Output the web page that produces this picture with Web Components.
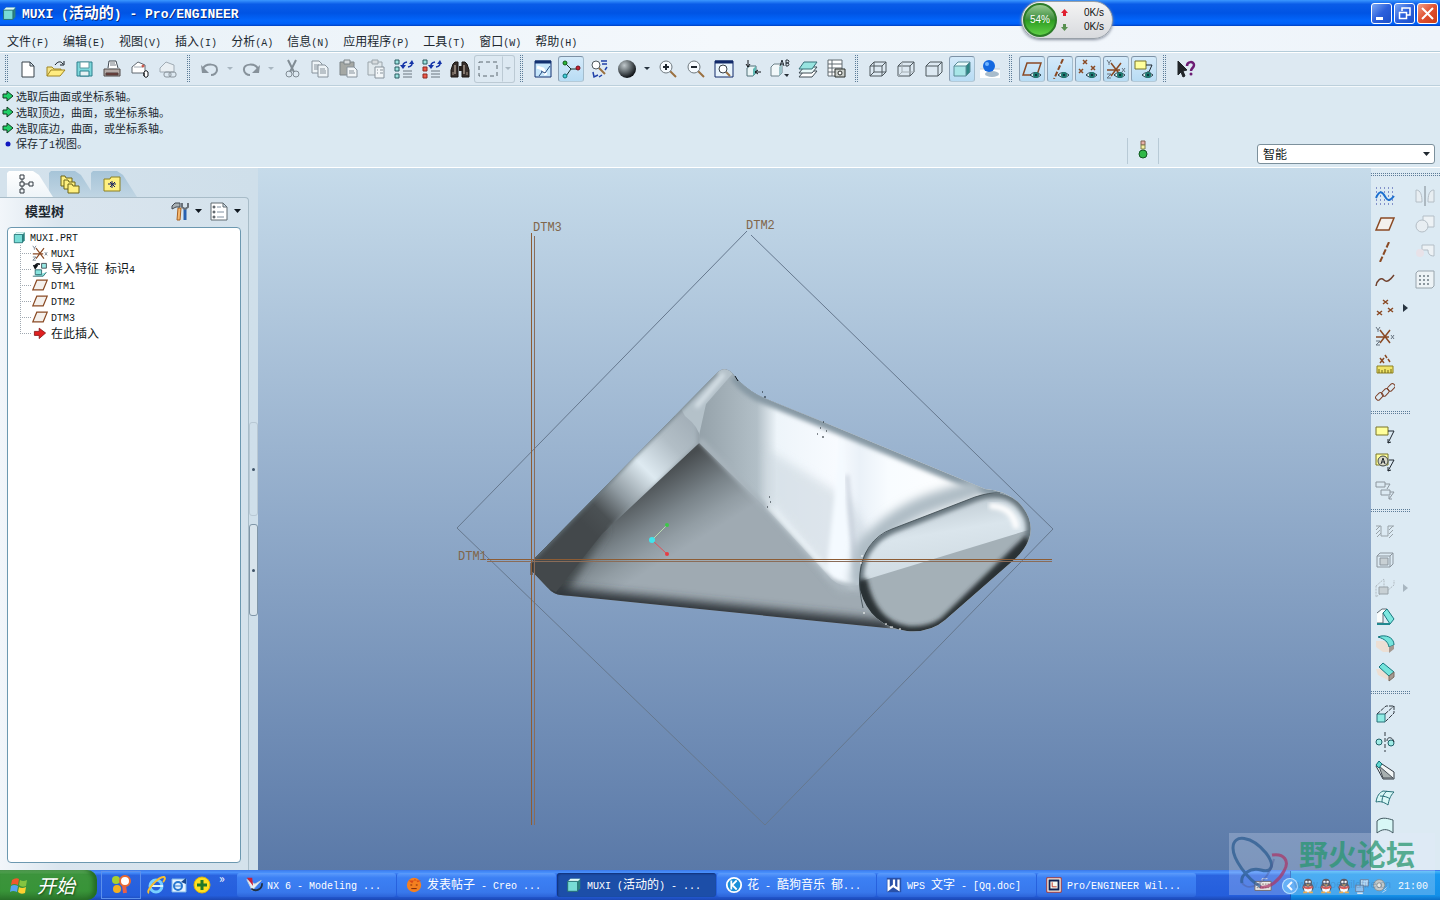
<!DOCTYPE html>
<html lang="zh-CN">
<head>
<meta charset="utf-8">
<meta name="viewport" content="width=device-width, initial-scale=1">
<title>MUXI (活动的) - Pro/ENGINEER</title>
<style>
  body {
    margin: 0;
    height: 100vh;
    display: flex;
    flex-direction: column;
    overflow: hidden;
    position: relative;
    background: #dbe9f2;
    color: #202830;
    font-family: "Noto Sans CJK SC", sans-serif;
    font-size: 12px;
    line-height: 16px;
  }

  main {
    flex: 1;
    min-height: 0;
    display: flex;
  }
</style>
</head>
<body>
  <pe-title-bar label="MUXI (活动的) - Pro/ENGINEER"></pe-title-bar>
  <pe-menu-bar items="文件(F),编辑(E),视图(V),插入(I),分析(A),信息(N),应用程序(P),工具(T),窗口(W),帮助(H)"></pe-menu-bar>

  <pe-toolbar>
    <pe-grip></pe-grip>
    <pe-tool icon="new" label="新建"></pe-tool>
    <pe-tool icon="open" label="打开"></pe-tool>
    <pe-tool icon="save" label="保存"></pe-tool>
    <pe-tool icon="print" label="打印"></pe-tool>
    <pe-tool icon="mail" label="发送"></pe-tool>
    <pe-tool icon="link" label="发送链接"></pe-tool>
    <pe-grip></pe-grip>
    <pe-tool icon="undo" label="撤消" caret="off"></pe-tool>
    <pe-tool icon="redo" label="重做" caret="off"></pe-tool>
    <pe-tool icon="cut" label="剪切"></pe-tool>
    <pe-tool icon="copy" label="复制"></pe-tool>
    <pe-tool icon="paste" label="粘贴"></pe-tool>
    <pe-tool icon="pasteSpecial" label="选择性粘贴"></pe-tool>
    <pe-tool icon="regen" label="再生"></pe-tool>
    <pe-tool icon="regenManager" label="再生管理器"></pe-tool>
    <pe-tool icon="find" label="查找"></pe-tool>
    <pe-tool icon="selectBox" label="选取框" caret="off" framed></pe-tool>
    <pe-grip></pe-grip>
    <pe-tool icon="repaint" label="重画"></pe-tool>
    <pe-tool icon="spin" label="旋转中心" pressed></pe-tool>
    <pe-tool icon="orient" label="定向模式"></pe-tool>
    <pe-tool icon="sphere" label="外观" caret></pe-tool>
    <pe-tool icon="zoomIn" label="放大"></pe-tool>
    <pe-tool icon="zoomOut" label="缩小"></pe-tool>
    <pe-tool icon="refit" label="重新调整"></pe-tool>
    <pe-tool icon="reorient" label="重定向"></pe-tool>
    <pe-tool icon="views" label="视图列表"></pe-tool>
    <pe-tool icon="layers" label="层"></pe-tool>
    <pe-tool icon="viewManager" label="视图管理器"></pe-tool>
    <pe-grip></pe-grip>
    <pe-tool icon="wireframe" label="线框"></pe-tool>
    <pe-tool icon="hiddenLine" label="隐藏线"></pe-tool>
    <pe-tool icon="noHidden" label="消隐"></pe-tool>
    <pe-tool icon="shaded" label="着色" pressed></pe-tool>
    <pe-tool icon="render" label="增强的真实感"></pe-tool>
    <pe-grip></pe-grip>
    <pe-tool icon="planeShow" label="平面显示" pressed></pe-tool>
    <pe-tool icon="axisShow" label="轴显示" pressed></pe-tool>
    <pe-tool icon="pointShow" label="点显示" pressed></pe-tool>
    <pe-tool icon="csysShow" label="坐标系显示" pressed></pe-tool>
    <pe-tool icon="noteShow" label="注释显示" pressed></pe-tool>
    <pe-grip></pe-grip>
    <pe-tool icon="help" label="帮助"></pe-tool>
  </pe-toolbar>

  <pe-message-area></pe-message-area>

  <main>
    <pe-model-tree></pe-model-tree>
    <pe-viewport></pe-viewport>
    <pe-feature-bar>
      <pe-grip across></pe-grip>
      <pe-tool icon="sketch" label="草绘"></pe-tool>
      <pe-tool icon="plane" label="基准平面"></pe-tool>
      <pe-tool icon="axis" label="基准轴"></pe-tool>
      <pe-tool icon="curve" label="基准曲线"></pe-tool>
      <pe-tool icon="points" label="基准点" flyout></pe-tool>
      <pe-tool icon="csys" label="基准坐标系"></pe-tool>
      <pe-tool icon="analysis" label="分析"></pe-tool>
      <pe-tool icon="chain" label="参照"></pe-tool>
      <pe-grip across></pe-grip>
      <pe-tool icon="note" label="注释"></pe-tool>
      <pe-tool icon="annotation" label="注释特征"></pe-tool>
      <pe-tool icon="noteGroup" label="注释组"></pe-tool>
      <pe-grip across></pe-grip>
      <pe-tool icon="hole" label="孔"></pe-tool>
      <pe-tool icon="shell" label="壳"></pe-tool>
      <pe-tool icon="rib" label="筋" flyout="off"></pe-tool>
      <pe-tool icon="draft" label="拔模"></pe-tool>
      <pe-tool icon="round" label="倒圆角"></pe-tool>
      <pe-tool icon="chamfer" label="倒角"></pe-tool>
      <pe-grip across></pe-grip>
      <pe-tool icon="extrude" label="拉伸"></pe-tool>
      <pe-tool icon="revolve" label="旋转"></pe-tool>
      <pe-tool icon="sweep" label="扫描"></pe-tool>
      <pe-tool icon="blend" label="边界混合"></pe-tool>
      <pe-tool icon="style" label="造型"></pe-tool>
      <pe-tool slot="edit" icon="mirror" label="镜像"></pe-tool>
      <pe-tool slot="edit" icon="merge" label="合并"></pe-tool>
      <pe-tool slot="edit" icon="trim" label="修剪"></pe-tool>
      <pe-tool slot="edit" icon="pattern" label="阵列"></pe-tool>
    </pe-feature-bar>
  </main>

  <pe-taskbar>
    <pe-task icon="nx" label="NX 6 - Modeling ..."></pe-task>
    <pe-task icon="creo" label="发表帖子 - Creo ..."></pe-task>
    <pe-task icon="part" label="MUXI (活动的) - ..." active></pe-task>
    <pe-task icon="kugou" label="花 - 酷狗音乐 郁..."></pe-task>
    <pe-task icon="wps" label="WPS 文字 - [Qq.doc]"></pe-task>
    <pe-task icon="proe" label="Pro/ENGINEER Wil..."></pe-task>
  </pe-taskbar>

  <pe-net-meter></pe-net-meter>
  <pe-watermark></pe-watermark>

<script>
const EYE = '<g stroke="none"><path d="M8 16q5-5 11 0q-5 5-11 0" fill="#dff0f2" stroke="#243c48"/><circle cx="14" cy="16" r="3" fill="#1d7a70"/><circle cx="14" cy="16" r="1" fill="#0a2030"/></g>';
const CSYS = '<path d="M5 4l10 13M15 4L5 17M1 11h13" stroke="#8a4a24" stroke-width="1.5"/><path d="M1 1l2 3 2-3M3 4v2M16 9l3 4m0-4l-3 4M1 15h4l-4 4h4" stroke="#687480"/>';
const REGEN = '<path d="M9 12h9M9 15h9M9 18h9" stroke="#6b7780"/><path d="M9 8q-1-4 4-5M18 3q1 4-4 5" stroke="#1434a8" stroke-width="1.5"/><path d="M6 6h6l-3 4zM15 5h5l-2-4z" fill="#1434a8" stroke="none"/>';
const LENS = '<path d="M12 12l6 6" stroke="#9a7040" stroke-width="2"/><circle cx="8" cy="8" r="6" fill="#f6fbff" stroke="#707a80"/>';
const CUBE = '<path d="M2 7l4-4h12v10l-4 4H2zM2 7h12v10M14 7l4-4"/>';

const ICONS = {
  new: '<path d="M4 3h8l4 4v11H4zM12 3v4h4" fill="#fff" stroke="#39424a"/>',
  open: '<path d="M1 17V8h5l2 2h7v3" fill="#f4e48a" stroke="#a08520"/><path d="M1 17l4-6h14l-5 6z" fill="#ffec80" stroke="#a08520"/><path d="M9 6c3-4 6-4 8-1m1-3v4h-4" stroke="#101820"/>',
  save: '<path d="M3 3h15v14H3z" fill="#7ed8dc" stroke="#2d7f8c"/><path d="M6 3h9v6H6z" fill="#fff" stroke="#5c98a0"/><path d="M6 12h9v5H6z" fill="#e8f2f4" stroke="#2d7f8c"/><path d="M8 13v3"/>',
  print: '<path d="M6 9l1-7h7l2 7" fill="#fff" stroke="#404850"/><path d="M8 4h5M8 6h6" stroke="#707880"/><path d="M2 10h16v7H2z" fill="#b4aaa6" stroke="#504a48"/><path d="M4 14h12v2H4z" fill="#783c34" stroke="#504040"/>',
  mail: '<path d="M2 8l6-5 7 3v8H2z" fill="#fff" stroke="#606870"/><path d="M4 8h9" stroke="#a0a8b0"/><circle cx="13" cy="7" r="1" stroke="#c02818"/><path d="M14 17v-4q2-3 4 0v4q-2 3-4 0v-3" fill="#fff" stroke="#101418"/>',
  link: '<path d="M2 9l6-6 8 3v7H2z" fill="#e9eff3" stroke="#a0abb4"/><rect x="6" y="13" width="7" height="5" rx="2" stroke="#8a949c"/><rect x="11" y="13" width="7" height="5" rx="2" stroke="#8a949c"/>',
  undo: '<path d="M3 10c2-6 15-6 14 1 0 3-3 5-6 5" stroke="#87929b" stroke-width="2"/><path d="M1 6l1 8h7z" fill="#87929b" stroke="none"/>',
  redo: '<path d="M17 10C15 4 2 4 3 11c0 3 3 5 6 5" stroke="#87929b" stroke-width="2"/><path d="M19 6l-1 8h-7z" fill="#87929b" stroke="none"/>',
  cut: '<path d="M6 1l6 12M14 1L8 13" stroke="#818c94" stroke-width="2"/><circle cx="7" cy="15" r="3" stroke="#818c94"/><circle cx="14" cy="15" r="3" stroke="#818c94"/>',
  copy: '<path d="M2 2h7l3 3v9H2zM4 6h5M4 8h5M4 10h5" fill="#eef4f7" stroke="#87929b"/><path d="M8 6h7l3 3v9H8zM10 10h5M10 12h6M10 14h6" fill="#eef4f7" stroke="#87929b"/>',
  paste: '<path d="M2 3h14v13H2z" fill="#a5a8a4" stroke="#7d8488"/><path d="M6 1h6v4H6z" fill="#d8dcde" stroke="#7d8488"/><path d="M9 8h7l3 3v7H9zM11 12h5M11 14h6" fill="#f2f6f8" stroke="#87929b"/>',
  pasteSpecial: '<path d="M2 3h14v13H2z" fill="#e0e8ec" stroke="#9aa4aa"/><path d="M6 1h6v4H6z" fill="#d8dcde" stroke="#9aa4aa"/><path d="M9 8h9v11H9zM11 11h1M14 11h3M11 14h1M14 14h3" fill="#f2f6f8" stroke="#87929b"/>',
  regen: '<path d="M1 1h4v4H1zM1 8h4v4H1zM1 15h4v4H1z" fill="#9de4df" stroke="#285a60"/>' + REGEN,
  regenManager: '<path d="M1 1h4v4H1z" fill="#9de4df" stroke="#285a60"/><path d="M1 8h4v4H1zM1 15h4v4H1z" fill="#f05848" stroke="#8a2820"/>' + REGEN,
  find: '<path d="M3 5l2-2h3v15H1v-7zM17 5l-2-2h-3v15h7v-7z" fill="#38302c" stroke="#181410"/><path d="M9 7h3v5H9z" fill="#28201c"/><path d="M5 6v9M14 6v9" stroke="#d8c8b8"/><path d="M3 13v3M17 13v3" stroke="#a89888"/>',
  selectBox: '<path d="M1 3h18v14H1z" stroke="#5c6870" stroke-dasharray="4 3"/>',
  repaint: '<path d="M2 2h16v16H2z" fill="#c6e6fb" stroke="#123070"/><path d="M2 3h16" stroke="#123070" stroke-width="3"/><path d="M4 8l6 2 3 6" stroke="#fff" stroke-width="3"/><path d="M8 12l4 2 5-7M9 13l-3 4" stroke="#254a80"/>',
  spin: '<path d="M4 4l6 6h6M10 10l-5 7" stroke="#183028"/><circle cx="4" cy="4" r="2" fill="#2cb838" stroke="#105818"/><circle cx="17" cy="9" r="2" fill="#c82030" stroke="#701018"/><circle cx="4" cy="17" r="2" fill="#40d0d8" stroke="#107078"/>',
  orient: '<path d="M10 9l6 6" stroke="#9a7040" stroke-width="2"/><circle cx="7" cy="6" r="4" fill="#fff" stroke="#505a60"/><path d="M12 2h6M13 5h5M18 8l-2 3M4 13l1 5 4-2M10 18l3-2" stroke="#2040a8" stroke-width="1.500"/>',
  sphere: '<circle cx="10" cy="10" r="9" fill="url(#ball)" stroke="none"/>',
  zoomIn: LENS + '<path d="M5 8h6M8 5v6" stroke="#202830" stroke-width="2"/>',
  zoomOut: LENS + '<path d="M5 8h6" stroke="#202830" stroke-width="2"/>',
  refit: '<path d="M1 2h18v16H1z" fill="#e8f4fc" stroke="#102868"/><path d="M1 3h18" stroke="#102868" stroke-width="3"/><path d="M12 13l4 4" stroke="#9a7040" stroke-width="2"/><circle cx="9" cy="10" r="4" fill="#fff" stroke="#384048"/>',
  reorient: '<path d="M5 9l3-2h6v7l-3 3H5z" fill="#e9f5f6" stroke="#507078"/><path d="M11 10l3-3v7l-3 3z" fill="#60b8b4"/><path d="M6 1v7m-2-3l2 3 2-3M19 13h-6m3-2l-3 2 3 2" stroke="#101418"/>',
  views: '<path d="M1 8l3-3h8v9l-3 3H1z" fill="#f2f8fa" stroke="#6c8088"/><path d="M9 8l3-3v9l-3 3z" fill="#9cc4ca"/><path d="M10 7l2-6 2 6M11 5h3M16 1h2q2 1 0 3h-2zM16 4h2q2 1 0 3h-2z" stroke="#283038"/><path d="M14 15h5l-2 3z" fill="#283038" stroke="none"/>',
  layers: '<path d="M6 12h13l-5 6H1z" fill="#fff" stroke="#404c54"/><path d="M6 8h13l-5 6H1z" fill="#e8f8f8" stroke="#404c54"/><path d="M6 3h13l-5 7H1z" fill="#98e4e0" stroke="#387078"/>',
  viewManager: '<path d="M2 1h14v16H2zM2 5h14M2 9h14M2 13h14M6 1v16" fill="#fff" stroke="#606a70"/><path d="M9 10h10v8H9z" fill="#c8ccc8" stroke="#282c28"/><circle cx="14" cy="14" r="2" fill="#fff" stroke="#282c28"/>',
  wireframe: '<g stroke="#4c565c">' + CUBE + '<path d="M6 3v10h12M6 13l-4 4"/></g>',
  hiddenLine: '<g stroke="#4c565c">' + CUBE + '<path d="M6 3v10h12M6 13l-4 4" stroke="#a4aeb4"/></g>',
  noHidden: '<g stroke="#4c565c">' + CUBE + '</g>',
  shaded: '<path d="M2 7l4-4h12l-4 4z" fill="#e8fafa"/><path d="M2 7h12v10H2z" fill="#a8e6e8"/><path d="M14 7l4-4v10l-4 4z" fill="#2e8684"/><g stroke="#5a8c98">' + CUBE + '</g>',
  render: '<path d="M0 10h20v9H0z" fill="#fff"/><path d="M0 10h20" stroke="#c8ccd0"/><ellipse cx="12" cy="15" rx="7" ry="3" fill="#a8bccc"/><circle cx="9" cy="7" r="6" fill="#1468e0"/><circle cx="7" cy="5" r="2" fill="#70b4ff"/>',
  planeShow: '<path d="M5 4h14l-4 12H1z" stroke="#8a4a24" stroke-width="1.5"/>' + EYE,
  axisShow: '<path d="M13 0L4 20" stroke="#8a4a24" stroke-width="2" stroke-dasharray="5 2"/>' + EYE,
  pointShow: '<path d="M5 1l4 4m0-4L5 5M13 7l4 4m0-4l-4 4M1 10l4 4m0-4l-4 4" stroke="#8a4a24" stroke-width="1.5"/>' + EYE,
  csysShow: CSYS + EYE,
  noteShow: '<path d="M1 2h11v8H1z" fill="#ffff9c" stroke="#787428"/><path d="M12 6h6l-4 9m0-3v3l3-1" stroke="#202830"/>' + EYE,
  help: '<path d="M2 2l9 9-4 1 2 5-2 1-2-5-3 3z" fill="#202428" stroke="#202428"/><path d="M11 7c0-5 7-5 7-1 0 3-3 3-3 6" stroke="#6c1c74" stroke-width="2.5"/><circle cx="15" cy="15" r="1.5" fill="#6c1c74"/>',

  sketch: '<path d="M1 2h18M1 6h18M1 10h18M1 14h18M1 18h18" stroke="#2838a0" stroke-dasharray="1 3"/><path d="M1 12c5-11 8-3 10 0s4 3 8-2" stroke="#1c70d0" stroke-width="2"/>',
  plane: '<path d="M6 4h13l-5 12H1z" fill="#f4f0ec" stroke="#8a4a24" stroke-width="1.5"/>',
  axis: '<path d="M14 0L5 20" stroke="#8a4a24" stroke-width="2" stroke-dasharray="6 2"/>',
  curve: '<path d="M1 16c1-6 5-9 8-6s6 0 10-5" stroke="#70402c" stroke-width="1.5"/>',
  points: '<path d="M8 2l5 4m0-4L8 6M13 10l5 4m0-4l-5 4M2 13l5 4m0-4l-5 4" stroke="#8a4a24" stroke-width="1.5"/>',
  csys: CSYS,
  analysis: '<path d="M5 4l4 5m0-5L5 9M10 1l2 3M13 5l2 3" stroke="#8a4a24" stroke-width="1.5"/><path d="M2 12h16v7H2z" fill="#f0e468" stroke="#8c8020"/><path d="M4 15v4M7 16v3M10 15v4M13 16v3M16 15v4" stroke="#706818"/>',
  chain: '<g stroke="#7c4028"><rect x="0" y="12" width="8" height="5" rx="2" transform="rotate(-45 4 14)"/><rect x="6" y="8" width="8" height="5" rx="2" transform="rotate(-45 10 10)"/><rect x="12" y="3" width="8" height="5" rx="2" transform="rotate(-45 16 5)"/></g>',
  note: '<path d="M1 3h12v8H1z" fill="#ffff9c" stroke="#787428"/><path d="M13 7h6l-6 12m0-4v4l3-1" stroke="#202830"/>',
  annotation: '<path d="M1 2h12v11H1z" fill="#ffff9c" stroke="#787428"/><circle cx="8" cy="9" r="5" fill="#d8d8c8" stroke="#404848"/><path d="M6 12l2-6 2 6M7 10h3M14 8h5l-6 11m0-4v4l3-1" stroke="#202830"/>',
  noteGroup: '<path d="M1 2h9v5H1zM6 10h9v5H6zM10 4h5l-3 5M15 12h4l-5 7m0-3v3h3" stroke="#8c969e"/>',
  hole: '<path d="M1 4h5v10h7V4h6M1 8l4-4M1 12l4-4M2 15l4-4M14 8l4-4M14 12l4-4M14 16l4-4" stroke="#98a2a8"/>',
  shell: '<path d="M2 6l3-3h13v11l-3 3H2zM15 6l3-3M2 6h13v11" stroke="#8c969e"/><path d="M5 8h8v7H5z" fill="#c8d0d4" stroke="#8c969e"/>',
  rib: '<path d="M1 8l8-7v12l-8 6zM11 14l8-7v-5" stroke="#b0bac0" stroke-dasharray="2 1"/><path d="M4 9h9v7H4z" fill="#c8d0d4" stroke="#98a2a8"/>',
  draft: '<path d="M2 7l5-4h5L8 7v10H2" fill="#f8fcfc" stroke="#606c74"/><path d="M8 7l4-4 7 10-4 5z" fill="#7ee8e0" stroke="#187880"/><path d="M2 18h13" stroke="#208890" stroke-width="2"/>',
  round: '<path d="M1 7h7c5 0 6 4 6 11H8L1 13z" fill="#ecdfd4"/><path d="M3 3l3-1c8-1 13 3 13 9l-5 2C13 8 10 5 3 3" fill="#74e4dc" stroke="#187880"/><path d="M14 13l5-2v4l-5 4z" fill="#a49890"/>',
  chamfer: '<path d="M1 7h6l8 7v5L3 13z" fill="#ecdfd4"/><path d="M4 5l4-4 11 9-5 4z" fill="#74e4dc" stroke="#187880"/><path d="M14 14l5-4v5l-5 4z" fill="#a49890" stroke="#786c60"/>',
  extrude: '<path d="M2 10h8v8H2z" fill="#90ece4" stroke="#287078"/><path d="M2 10l9-8h8v7l-9 9M10 10l9-8" stroke="#303840" stroke-dasharray="4 1"/>',
  revolve: '<path d="M10 0v20" stroke="#303840" stroke-dasharray="4 2"/><circle cx="4" cy="10" r="3" fill="#a0ece6" stroke="#206068"/><circle cx="16" cy="11" r="3" fill="#a0ece6" stroke="#206068"/><path d="M12 9c0-5 6-4 7 1" stroke="#303840"/>',
  sweep: '<path d="M4 2l15 10v7H8L1 6z" fill="#f2f6f6" stroke="#303840"/><path d="M4 6l14 12H8z" fill="#a8b0b0" stroke="#485058"/><path d="M1 5l3-4 3 3-3 4z" fill="#60d8d0" stroke="#107078"/>',
  blend: '<path d="M1 14c1-6 3-9 7-11l11 1c-4 4-5 8-6 13-4-3-8-4-12-3M5 8c4 0 8 1 10 3M12 3c-4 3-5 7-5 11" fill="#d8f8f6" stroke="#287078"/>',
  style: '<path d="M2 17V5c5-5 12-2 16-1v13c-6-5-11-4-16 0z" fill="#d8f8f6" stroke="#405860"/>',
  mirror: '<path d="M10 0v20" stroke="#7c868e"/><path d="M1 16V4c5 0 6 6 6 12zM19 16V4c-5 0-6 6-6 12z" fill="#e8eef2" stroke="#b4bec6"/>',
  merge: '<path d="M8 2h11v11H8z" fill="#edf2f5" stroke="#b4bec6"/><circle cx="7" cy="12" r="6" fill="#e8eef2" stroke="#b4bec6"/>',
  trim: '<path d="M7 3h12v11c-5 0-6-3-6-6H7z" fill="#edf2f5" stroke="#b4bec6"/><circle cx="5" cy="11" r="4" fill="#e8e2e8"/>',
  pattern: '<path d="M1 3l2-2h16v15l-2 2H1z" fill="#edf3f6" stroke="#98a4ac"/><path d="M4 6h12M4 10h12M4 14h12" stroke="#8c989f" stroke-width="2" stroke-dasharray="2 2"/>',

  treeTab: '<path d="M2 1h4v4H2zM2 8h4v4H2zM2 15h4v4H2zM11 8h4v4h-4zM4 5v3M4 12v3M6 10h5" stroke="#303840"/>',
  folders: '<g fill="#fff080" stroke="#6c6418"><path d="M1 2h4l1 2h6v8H1z"/><path d="M4 6h4l1 2h6v7H4z"/><path d="M8 10h4l1 2h6v7H8z"/></g>',
  favorites: '<path d="M2 5h6l1-2h9v14H2z" fill="#fff080" stroke="#8c8020"/><path d="M10 7v7M6 10h8M8 8l5 5m0-5l-5 5" stroke="#182060"/>',
  hammer: '<path d="M8 7l-1 12h3l1-12z" fill="#f4b870" stroke="#a86020"/><path d="M2 8V5l3-3h5v4H6z" fill="#a8b0b4" stroke="#404850"/><path d="M15 7v12" stroke="#2860b0" stroke-width="3"/><path d="M12 2v4l3 2 3-2V2" stroke="#687078" stroke-width="2"/>',
  list: '<path d="M2 2h12l4 4v13H2zM14 2v4h4" fill="#fff" stroke="#606a70"/><circle cx="5" cy="6" r="1" stroke="#303840"/><circle cx="5" cy="11" r="1" stroke="#303840"/><circle cx="5" cy="16" r="1" stroke="#303840"/><path d="M8 6h4M8 11h7M8 16h7" stroke="#8090a0"/>',
  part: '<path d="M3 6l3-3h11v11l-3 3H3z" fill="#2c8480"/><path d="M3 6l3-3h11l-3 3z" fill="#e0fbf8"/><path d="M3 6h11v11H3z" fill="#78dcd6" stroke="#246c70"/>',
  import: '<path d="M12 3h6v6h-6z" fill="#98e8e4" stroke="#303840"/><path d="M4 11h8v6H4zM1 19h13l4-5" fill="#88e4de" stroke="#205860"/><path d="M10 4c-4-1-6 0-6 3M2 5l2 4 3-4" stroke="#101418" stroke-width="2"/>',
  insert: '<path d="M3 8h6V4l8 6-8 7v-4H3z" fill="#e02020" stroke="#801010"/>',

  flag: '<g stroke="none"><path d="M2 5q4-3 7-1l-1 6q-4-2-7 0z" fill="#f0582c"/><path d="M10 5q3 2 7 0l-1 6q-4 2-7-1z" fill="#84c440"/><path d="M1 11q3-2 7 0l-1 6q-4-2-7 0z" fill="#58a4f0"/><path d="M9 12q3 2 7 0l-1 6q-4 2-7-1z" fill="#fcd030"/></g>',
  swirl: '<circle cx="5" cy="5" r="4" fill="#a8d030"/><path d="M13 10l1 8" stroke="#e86048" stroke-width="4"/><circle cx="14" cy="6" r="5" fill="#fff" stroke="#e86830" stroke-width="2"/><circle cx="6" cy="14" r="4" fill="#f4b020"/>',
  ie: '<circle cx="10" cy="11" r="6" stroke="#78d0ff" stroke-width="3"/><path d="M6 11h11" stroke="#d8f4ff" stroke-width="2"/><path d="M3 18C-1 16 13 1 18 2c2 1 0 4-1 5" stroke="#f8c030" stroke-width="2"/>',
  outlook: '<path d="M3 4h14v13H3z" fill="#e4f2ff" stroke="#80b8e8"/><circle cx="9" cy="11" r="4" stroke="#2878d0" stroke-width="2"/><path d="M6 11h7" stroke="#2878d0"/><path d="M12 7l5-4v6z" fill="#184890"/>',
  plus: '<circle cx="10" cy="10" r="8" fill="#ffe020" stroke="#d8b010"/><path d="M10 5v10M5 10h10" stroke="#207828" stroke-width="3"/>',
  nx: '<path d="M2 4l6 12 10-11-7 4z" fill="#e8f0f4" stroke="#c8d0d4"/><path d="M2 2h6l1 9z" fill="#c82038"/><path d="M7 14c5 4 12 1 12-6" stroke="#203040" stroke-width="2"/>',
  creo: '<circle cx="10" cy="10" r="8" fill="#f48020"/><path d="M4 5l4 3 3-5 3 4 4-2" fill="#d84818"/><path d="M6 10h2M12 10h2M7 14h6" stroke="#702008"/>',
  kugou: '<circle cx="10" cy="10" r="8" fill="#1890d8" stroke="#fff" stroke-width="2"/><path d="M7 5v10M13 5l-5 5 5 5" stroke="#fff" stroke-width="2"/>',
  wps: '<path d="M2 2h16v16H2z" fill="#2850a8"/><path d="M4 4v11l5-4 6 4V4M10 4v7" stroke="#fff" stroke-width="2.5"/>',
  proe: '<path d="M2 2h16v16H2z" fill="#f8f8f0" stroke="#b02818"/><path d="M5 5h10v10H5z" stroke="#102050" stroke-width="2"/><path d="M8 7v5h5" stroke="#c03020"/>',
  keyboard: '<path d="M9 6V3h6" stroke="#e0e0e0"/><path d="M1 6h18v10H1z" fill="#f0ece4" stroke="#483830"/><path d="M3 9h14M3 13h14" stroke="#604438" stroke-dasharray="2 1"/>',
  penguin: '<ellipse cx="10" cy="12" rx="7" ry="6" fill="#302c34"/><ellipse cx="10" cy="13" rx="5" ry="5" fill="#fff"/><circle cx="10" cy="6" r="5" fill="#302c34"/><circle cx="8" cy="5" r="1.5" fill="#fff"/><circle cx="12" cy="5" r="1.5" fill="#fff"/><path d="M7 8h6l-3 2z" fill="#f8a820"/><path d="M4 11q6 3 12 0" stroke="#e03020" stroke-width="3"/><path d="M4 18h5M11 18h5" stroke="#f09818" stroke-width="2"/>',
  network: '<path d="M8 2h10v8H8z" fill="#a8d4f4" stroke="#405878"/><path d="M2 9h10v8H2z" fill="#70b0e8" stroke="#405878"/><path d="M4 19h7" stroke="#d8e0e8" stroke-width="2"/>',
  speaker: '<circle cx="9" cy="9" r="7" fill="#b8bcb8" stroke="#606868"/><circle cx="9" cy="9" r="3" fill="#e8ece8" stroke="#585c58"/><path d="M15 15l4-4M13 18l5-3" stroke="#d0dce8"/>',
};

// ASCII runs are set at half the width of a Chinese character
const halfWidth = (text) => text.replace(/[\x20-\x7e]+/g, '<span class="half">$&</span>');

const svgIcon = (name, size = 20) => `
  <svg width="${size}" height="${size}" viewBox="0 0 20 20" fill="none" aria-hidden="true">
    ${name === "sphere" ? '<defs><radialGradient id="ball" cx=".35" cy=".3" r=".7"><stop offset="0" stop-color="#c0c8cc"/><stop offset=".5" stop-color="#687074"/><stop offset="1" stop-color="#101418"/></radialGradient></defs>' : ""}
    ${ICONS[name]}
  </svg>`;

const BASE = `
  :host, * { box-sizing: border-box; }
  button {
    margin: 0;
    padding: 0;
    border: 0;
    background: none;
    color: inherit;
    font: inherit;
    cursor: default;
  }
  svg { display: block; flex: none; }
  .half {
    font-family: "Liberation Mono", monospace;
    font-size: 10px;
    white-space: pre;
  }
`;

class PeElement extends HTMLElement {
  constructor() {
    super();
    this._shadowRoot = this.attachShadow({ mode: "open" });
  }

  connectedCallback() {
    this._shadowRoot.innerHTML = `<style>${BASE}${this.styles()}</style>${this.render()}`;
  }

  styles() {
    return "";
  }

  render() {
    return "";
  }
}

class TitleBar extends PeElement {
  styles() {
    return `
      :host {
        flex: none;
        height: 26px;
        display: flex;
        align-items: center;
        gap: 4px;
        padding: 0 2px 0 1px;
        background: linear-gradient(#3c98ff, #0a5ce8 16%, #0054e4 50%, #0266fc 80%, #0060f8 92%, #0040c0);
        color: #fff;
      }
      h1 {
        margin: 0;
        flex: 1;
        font-size: 15px;
        line-height: 24px;
        font-weight: 700;
        text-shadow: 1px 1px #0a2c80;
      }
      h1 .half { font-size: 13px; }
      .buttons { display: flex; gap: 2px; }
      .buttons button {
        width: 21px;
        height: 21px;
        border: 1px solid #fff;
        border-radius: 3px;
        background: linear-gradient(135deg, #7ca8f4, #2c60dc 50%, #1c50c8);
      }
      .buttons .close { background: linear-gradient(135deg, #f0a088, #e05030 50%, #c83c18); }
    `;
  }

  render() {
    return `
      ${svgIcon("part", 17)}
      <h1>${halfWidth(this.getAttribute("label"))}</h1>
      <div class="buttons">
        <button aria-label="最小化"><svg width="19" height="19"><path d="M4 13h7v3H4z" fill="#fff"/></svg></button>
        <button aria-label="还原"><svg width="19" height="19" fill="none" stroke="#fff"><path d="M7 7V4h8v7h-3M4.500 8.500h7v6h-7z" stroke-width="1.500"/></svg></button>
        <button class="close" aria-label="关闭"><svg width="19" height="19" stroke="#fff" stroke-width="2"><path d="M4 4l11 11M15 4L4 15"/></svg></button>
      </div>
    `;
  }
}

class MenuBar extends PeElement {
  styles() {
    return `
      :host {
        flex: none;
        display: block;
        height: 26px;
        border-bottom: 1px solid #b4ccd9;
        background: linear-gradient(90deg, #e8f1f7, #f4f8fc 50%, #eef4fa);
      }
      nav { display: flex; gap: 14px; padding: 7px; }
      button { white-space: nowrap; line-height: 16px; }
    `;
  }

  render() {
    const items = this.getAttribute("items").split(",");
    return `<nav>${items.map((item) => `<button>${halfWidth(item)}</button>`).join("")}</nav>`;
  }
}

class Toolbar extends PeElement {
  styles() {
    return `
      :host {
        flex: none;
        display: flex;
        align-items: center;
        height: 34px;
        border-top: 1px solid #fff;
        border-bottom: 1px solid #bcd0dc;
        background: #dde9f2;
      }
    `;
  }

  render() {
    return "<slot></slot>";
  }
}

class Grip extends PeElement {
  styles() {
    return `
      :host {
        flex: none;
        display: flex;
        align-items: center;
        justify-content: center;
        width: 14px;
        height: 28px;
      }
      :host([across]) { width: 100%; height: 14px; }
      i {
        width: 4px;
        height: 28px;
        background:
          linear-gradient(transparent 1px, #dde9f2 1px) 0 0 / 2px 2px,
          linear-gradient(90deg, #5c7c98 1px, transparent 1px) 0 0 / 2px 2px;
      }
      :host([across]) i { width: 100%; height: 4px; }
    `;
  }

  render() {
    return "<i></i>";
  }
}

class Tool extends PeElement {
  styles() {
    return `
      :host { flex: none; display: flex; align-items: center; }
      button {
        width: 26px;
        height: 26px;
        margin: 1px;
        border: 1px solid transparent;
        border-radius: 3px;
        display: flex;
        align-items: center;
        justify-content: center;
      }
      :host([pressed]) button {
        border-color: #7e92a6 #a4bccc #b4cad8 #8ca0b4;
        background: linear-gradient(#d4eafa, #b8dcf4);
      }
      :host([framed]) { border-radius: 3px; box-shadow: inset 0 0 0 1px #bccad4; }
      .caret {
        width: 13px;
        height: 26px;
        margin: 0;
      }
      :host([framed]) .caret { border-left-color: #bccad4; border-radius: 0; }
      .flyout { width: 12px; margin: 0; }
    `;
  }

  arrow(kind, path) {
    const color = this.getAttribute(kind) === "off" ? "#a8b6c0" : "#283440";
    return `
      <button class="${kind}" aria-label="${this.getAttribute("label")} 选项">
        <svg width="7" height="8"><path d="${path}" fill="${color}"/></svg>
      </button>`;
  }

  render() {
    return `
      <button aria-label="${this.getAttribute("label")}">${svgIcon(this.getAttribute("icon"))}</button>
      ${this.hasAttribute("caret") ? this.arrow("caret", "M0 2h6L3 5z") : ""}
      ${this.hasAttribute("flyout") ? this.arrow("flyout", "M1 0l5 4-5 4z") : ""}
    `;
  }
}

class MessageArea extends PeElement {
  styles() {
    return `
      :host {
        flex: none;
        display: flex;
        height: 82px;
        border-top: 1px solid #f4f9fc;
        border-bottom: 1px solid #fff;
      }
      ul {
        flex: 1;
        margin: 0;
        padding: 1px 2px;
        list-style: none;
        font-size: 11px;
      }
      li { display: flex; align-items: center; gap: 2px; height: 16px; }
      .status { display: flex; align-items: flex-end; padding: 0 5px 3px 0; }
      .light {
        display: flex;
        justify-content: center;
        width: 32px;
        height: 26px;
        border: solid #b8cad6;
        border-width: 0 1px;
        margin-right: 98px;
      }
      .filter {
        width: 178px;
        display: grid;
        align-items: center;
      }
      .filter > * { grid-area: 1 / 1; }
      .filter svg { justify-self: end; margin-right: 5px; pointer-events: none; }
      select {
        width: 100%;
        height: 20px;
        padding: 0 5px;
        appearance: none;
        border: 1px solid #7c909c;
        border-radius: 3px;
        background: #fff;
        color: #101820;
        font: inherit;
      }
    `;
  }

  render() {
    const prompts = ["选取后曲面或坐标系轴。", "选取顶边，曲面，或坐标系轴。", "选取底边，曲面，或坐标系轴。"];
    const arrow = '<svg width="12" height="12"><path d="M1 4h4V1l6 5-6 5V8H1z" fill="#20d068" stroke="#103820"/></svg>';
    const dot = '<svg width="12" height="12"><circle cx="6" cy="6" r="2.500" fill="#1018c0"/></svg>';
    return `
      <ul>
        ${prompts.map((text) => `<li>${arrow}<span>${text}</span></li>`).join("")}
        <li>${dot}<span>${halfWidth("保存了1视图。")}</span></li>
      </ul>
      <div class="status">
        <div class="light">
          <svg width="12" height="22" viewBox="0 0 12 22">
            <path d="M4 3h4v4H4z" fill="#e8b0a8" stroke="#806050"/>
            <path d="M4 7h4v4H4z" fill="#f4f0a0" stroke="#808050"/>
            <circle cx="6" cy="16" r="4" fill="#30b848" stroke="#105820"/>
          </svg>
        </div>
        <div class="filter">
          <select aria-label="选取过滤器"><option>智能</option></select>
          <svg width="7" height="4"><path d="M0 0h7L3.500 4z" fill="#202830"/></svg>
        </div>
      </div>
    `;
  }
}

class ModelTree extends PeElement {
  styles() {
    return `
      :host {
        flex: none;
        display: flex;
        width: 258px;
        background: linear-gradient(90deg, #d4e2ec, #cfdfea);
      }
      .panel { flex: 1; display: flex; flex-direction: column; padding-top: 3px; }
      .tabs { display: flex; padding-left: 7px; height: 26px; }
      .tabs button {
        width: 50px;
        margin-right: -8px;
        padding: 0 0 0 11px;
        display: flex;
        align-items: center;
        background: linear-gradient(#a6c4d8, #c0d5e3);
        clip-path: polygon(0 2px, 2px 0, 26px 0, 32px 4px, 46px 26px, 0 26px);
      }
      .tabs button:first-child {
        background: linear-gradient(#fff, #eef4f8);
        position: relative;
        z-index: 1;
      }
      .body {
        flex: 1;
        display: flex;
        flex-direction: column;
        padding: 0 7px 7px;
        border: 1px solid #a8bcc8;
        border-width: 1px 1px 0 0;
        border-radius: 0 4px 0 0;
        background: linear-gradient(90deg, #f2f6fa, #dae5ee 60px, #d4e2ec);
      }
      header { display: flex; align-items: center; height: 29px; padding-bottom: 3px; }
      h2 {
        flex: 1;
        margin: 0;
        padding-left: 18px;
        font-size: 13px;
        font-weight: 700;
      }
      header button { display: flex; align-items: center; gap: 5px; margin-left: 7px; }
      .tree {
        flex: 1;
        border: 1px solid #6c98b0;
        border-radius: 4px;
        background: #fff;
        padding: 1px 4px;
        color: #101820;
      }
      ul { margin: 0; padding: 0; list-style: none; }
      .node { display: flex; align-items: center; gap: 3px; height: 16px; white-space: nowrap; }
      ul ul { padding-left: 8px; }
      ul ul li { display: flex; }
      ul ul li::before {
        content: "";
        width: 12px;
        height: 16px;
        background:
          linear-gradient(90deg, #a0a8b0 1px, transparent 1px) 0 8px / 2px 1px repeat-x,
          linear-gradient(#a0a8b0 1px, transparent 1px) 0 0 / 1px 2px repeat-y;
      }
      ul ul li:last-child::before { height: 9px; }
      .sash { width: 9px; display: flex; flex-direction: column; gap: 8px; padding-top: 254px; }
      .sash button {
        width: 9px;
        height: 94px;
        border: 1px solid #b8c8d4;
        border-radius: 3px;
        display: flex;
        align-items: center;
        justify-content: center;
      }
      .sash button:last-child { border-color: #8096a8; height: 92px; background: #d8e4ec; }
      .sash i { width: 3px; height: 3px; border-radius: 2px; background: #405468; }
    `;
  }

  render() {
    const nodes = [
      ["csys", "MUXI"],
      ["import", "导入特征 标识4"],
      ["plane", "DTM1"],
      ["plane", "DTM2"],
      ["plane", "DTM3"],
      ["insert", "在此插入"],
    ];
    const caret = '<svg width="7" height="4"><path d="M0 0h7L3.500 4z" fill="#101820"/></svg>';
    const children = nodes
      .map(([icon, text]) => `<li><div class="node">${svgIcon(icon, 16)}<span>${halfWidth(text)}</span></div></li>`)
      .join("");
    return `
      <div class="panel">
        <div class="tabs">
          <button aria-label="模型树">${svgIcon("treeTab")}</button>
          <button aria-label="文件夹浏览器">${svgIcon("folders")}</button>
          <button aria-label="收藏夹">${svgIcon("favorites")}</button>
        </div>
        <div class="body">
          <header>
            <h2>模型树</h2>
            <button aria-label="设置">${svgIcon("hammer")}${caret}</button>
            <button aria-label="显示">${svgIcon("list")}${caret}</button>
          </header>
          <div class="tree">
            <ul>
              <li>
                <div class="node">${svgIcon("part", 15)}<span>${halfWidth("MUXI.PRT")}</span></div>
                <ul>${children}</ul>
              </li>
            </ul>
          </div>
        </div>
      </div>
      <div class="sash">
        <button aria-label="折叠"><i></i></button>
        <button aria-label="调整宽度"><i></i></button>
      </div>
    `;
  }
}

class Viewport extends PeElement {
  styles() {
    return `
      :host {
        flex: 1;
        min-width: 0;
        display: block;
        background: linear-gradient(#c6dbea, #5a79a8);
      }
      svg { width: 100%; height: 100%; }
      text {
        font-family: "Liberation Mono", monospace;
        font-size: 12px;
        fill: #80664a;
      }
    `;
  }

  render() {
    return `
      <svg viewBox="258 168 1113 702" role="img" aria-label="MUXI">
        <defs>
          <clipPath id="body">
            <path d="M533 560L716 374Q724 365 732 373L738 380Q750 392 764 398L821 421L985 489Q1004 490 1018 502Q1034 519 1030 538Q1026 548 1016 558L945 620Q932 632 912 631L886 628L561 595Q553 594 548 588L531 570Z"/>
          </clipPath>
          <clipPath id="cap">
            <path d="M860 590Q856 563 870 546Q878 535 892 529L975 497Q1004 487 1020 504Q1036 522 1028 541Q1025 549 1016 558L945 620Q930 633 907 631Q870 626 860 590Z"/>
          </clipPath>
          <clipPath id="wall">
            <path d="M525 560L679 405L685 416Q703 430 699 443L602 534L556 592L525 576Z"/>
          </clipPath>
          <linearGradient id="base" gradientUnits="userSpaceOnUse" x1="632" y1="452" x2="690" y2="545">
            <stop offset=".3" stop-color="#484d50"/>
            <stop offset=".65" stop-color="#7a848a"/>
            <stop offset=".85" stop-color="#929da4"/>
            <stop offset="1" stop-color="#9faab2"/>
          </linearGradient>
          <linearGradient id="strip" gradientUnits="userSpaceOnUse" x1="590" y1="530" x2="694" y2="426">
            <stop offset="0" stop-color="#43484b"/>
            <stop offset=".14" stop-color="#4b5154"/>
            <stop offset=".32" stop-color="#909ba2"/>
            <stop offset=".56" stop-color="#deeaf1"/>
            <stop offset=".8" stop-color="#b2bec6"/>
            <stop offset="1" stop-color="#a4b0b9"/>
          </linearGradient>
          <linearGradient id="upper" gradientUnits="userSpaceOnUse" x1="700" y1="0" x2="985" y2="0">
            <stop offset="0" stop-color="#95a2aa"/>
            <stop offset=".2" stop-color="#b2bfc7"/>
            <stop offset=".27" stop-color="#eef5fa"/>
            <stop offset=".48" stop-color="#f8fbff"/>
            <stop offset=".56" stop-color="#eaf1f8"/>
            <stop offset=".66" stop-color="#f8fcff"/>
            <stop offset="1" stop-color="#fff"/>
          </linearGradient>
          <linearGradient id="capTop" x1=".3" y1="0" x2=".5" y2="1">
            <stop offset="0" stop-color="#aab6be"/>
            <stop offset=".35" stop-color="#dae5ec"/>
            <stop offset="1" stop-color="#bdc9d1"/>
          </linearGradient>
          <filter id="soft" x="-20%" y="-50%" width="140%" height="200%"><feGaussianBlur stdDeviation="5"/></filter>
          <filter id="fine" x="-20%" y="-20%" width="140%" height="140%"><feGaussianBlur stdDeviation="2"/></filter>
        </defs>

        <g fill="none" stroke="#66788e">
          <path d="M747 231L457 528L765 825L1053 529L751 235"/>
        </g>

        <g clip-path="url(#body)">
          <path d="M520 360H1040V640H520Z" fill="url(#base)"/>
          <path d="M510 530L590 510L606 530L590 555L568 590L560 620H510Z" fill="#43484b" filter="url(#soft)"/>
          <path d="M550 596L890 631" stroke="#30383c" stroke-width="20" filter="url(#soft)"/>

          <!-- upper wall, sloping down to the groove beside the boss -->
          <path d="M697 400L724 360L1040 480L990 520L870 560L858 585Q838 590 826 573L768 510L699 443Z" fill="url(#upper)"/>
          <path d="M768 500L768 450L850 500L900 590H840Z" fill="#c4d0d9" opacity=".5" filter="url(#soft)"/>
          <path d="M842 425L826 575L854 588L846 490Z" fill="#f4faff" filter="url(#fine)"/>
          <path d="M847 475L856 570" stroke="#c4ccd8" stroke-width="3" filter="url(#fine)"/>
          <path d="M700 440L768 510L830 580Q842 588 858 585" fill="none" stroke="#a8b4bc" stroke-width="5" filter="url(#fine)"/>
          <path d="M768 506L828 571" stroke="#f0f8fc" stroke-width="3" filter="url(#fine)"/>
          <path d="M735 376Q748 392 764 398L821 421L985 489Q1004 490 1018 502" fill="none" stroke="#8799a4" stroke-width="12" filter="url(#fine)"/>
          <path d="M980 487L930 503Q890 518 864 550L858 585" fill="none" stroke="#aebcc5" stroke-width="18" filter="url(#soft)"/>
          <path d="M670 400L715 360H730L734 372L706 404L698 440L676 420Z" fill="#b4c1c9"/>
          <path d="M696 407L724 374" stroke="#dce6ec" stroke-width="4" filter="url(#fine)"/>

          <g clip-path="url(#wall)">
            <path d="M525 400H710V600H525Z" fill="url(#strip)"/>
            <path d="M611 531L700 445V425" fill="none" stroke="#909ca4" stroke-width="5" filter="url(#fine)"/>
          </g>
          <path d="M533 558L716 372" stroke="#687880" stroke-width="4" filter="url(#fine)"/>
        </g>

        <g clip-path="url(#cap)">
          <path d="M850 480H1040V640H850Z" fill="url(#capTop)"/>
          <path d="M855 583L1035 528V640H855Z" fill="#a4b0b7"/>
          <path d="M992 506Q1012 507 1016 526" fill="none" stroke="#fff" stroke-width="6" stroke-linecap="round" filter="url(#fine)"/>
          <path d="M860 590Q856 563 870 546Q878 535 892 529L975 497Q1004 487 1020 504Q1036 522 1028 541" fill="none" stroke="#66747d" stroke-width="9" filter="url(#fine)"/>
          <path d="M1030 541L945 624Q930 635 907 633Q870 628 860 580" fill="none" stroke="#2a3236" stroke-width="14" filter="url(#fine)"/>
        </g>
        <path d="M863 608Q854 570 869 547Q878 534 892 529L975 497Q990 492 1000 493" fill="none" stroke="#3c484f" opacity=".8"/>

        <path d="M735 376l3 5M762 392h1M764 397h2M823 422h1M817 434h1M822 437h2M826 431h1M820 428h1M769 497h1M770 502h1M767 507h1" stroke="#101820"/>
        <path d="M862 555v2M861 562v2M864 612v2M885 624h2M890 627h3M899 629h2" stroke="#fff"/>

        <path d="M531.500 563v12" stroke="#403024" stroke-width="2"/>
        <path d="M531.500 233V825M487 559.500H1052" fill="none" stroke="#8c5c34"/>
        <path d="M534.500 236V825M487 561.500H1052" fill="none" stroke="#8a6c58"/>
        <text x="533" y="231">DTM3</text>
        <text x="746" y="229">DTM2</text>
        <text x="458" y="560">DTM1</text>

        <path d="M652 540L667 525" stroke="#b8dcb0"/>
        <path d="M652 540L667 554" stroke="#e05058"/>
        <circle cx="652" cy="540" r="3" fill="#40e4ec"/>
        <circle cx="667" cy="525" r="2" fill="#3cc848"/>
        <circle cx="667" cy="554" r="2" fill="#e83c44"/>
      </svg>
    `;
  }
}

class FeatureBar extends PeElement {
  styles() {
    return `
      :host {
        flex: none;
        display: flex;
        width: 69px;
        overflow: hidden;
        background: #dceaf3;
      }
      div { display: flex; flex-direction: column; }
      .create { width: 40px; }
      .edit { width: 29px; }
    `;
  }

  render() {
    return `
      <div class="create"><slot></slot></div>
      <div class="edit"><pe-grip across></pe-grip><slot name="edit"></slot></div>
    `;
  }
}

class Taskbar extends PeElement {
  styles() {
    return `
      :host {
        flex: none;
        display: flex;
        height: 30px;
        background: linear-gradient(#3c78e8, #4890fc 8%, #2a64e0 18%, #245edc 85%, #1c48b4);
        color: #fff;
      }
      .start {
        width: 97px;
        padding-left: 10px;
        display: flex;
        align-items: center;
        gap: 7px;
        border-radius: 0 10px 10px 0;
        background: linear-gradient(#68b468, #3c943c 15%, #389438 70%, #2c742c);
        box-shadow: inset -4px 0 4px #246c24;
        font-size: 19px;
        line-height: 28px;
        font-style: italic;
        text-shadow: 1px 1px 2px #184818;
      }
      .quick { display: flex; align-items: center; gap: 3px; padding-left: 4px; width: 140px; }
      .quick .boxed { padding: 3px 9px; margin-right: 2px; border: 1px solid #5c90ec; }
      .quick .more { margin: -14px 0 0 4px; }
      .tasks { flex: 1; display: flex; padding-top: 3px; }
      .keyboard { display: flex; align-items: center; padding-right: 18px; }
      .tray {
        display: flex;
        align-items: center;
        gap: 2px;
        padding: 0 12px 0 6px;
        margin-top: 1px;
        border-left: 1px solid #1454b8;
        background: linear-gradient(#48b8f8, #1898f0 12%, #1490e8 85%, #0c70c8);
      }
      .expand {
        width: 16px;
        height: 16px;
        margin-left: -15px;
        border-radius: 8px;
        background: #3c9cf4;
        box-shadow: inset 0 0 0 1px #a8d8ff;
        display: flex;
        align-items: center;
        justify-content: center;
      }
      time { margin-left: 8px; }
    `;
  }

  render() {
    return `
      <button class="start">${svgIcon("flag")}<span>开始</span></button>
      <div class="quick">
        <button class="boxed" aria-label="浏览器">${svgIcon("swirl")}</button>
        <button aria-label="Internet Explorer">${svgIcon("ie")}</button>
        <button aria-label="Outlook Express">${svgIcon("outlook")}</button>
        <button aria-label="安全卫士">${svgIcon("plus")}</button>
        <button class="more">»</button>
      </div>
      <div class="tasks"><slot></slot></div>
      <div class="keyboard">${svgIcon("keyboard", 18)}</div>
      <div class="tray">
        <button class="expand" aria-label="显示隐藏的图标">
          <svg width="8" height="10" fill="none" stroke="#fff" stroke-width="2"><path d="M6 1L2 5l4 4"/></svg>
        </button>
        ${svgIcon("penguin", 16)}${svgIcon("penguin", 16)}${svgIcon("penguin", 16)}
        ${svgIcon("network", 16)}${svgIcon("speaker", 16)}
        <time>${halfWidth("21:00")}</time>
      </div>
    `;
  }
}

class Task extends PeElement {
  styles() {
    return `
      :host { display: flex; width: 160px; }
      button {
        flex: 1;
        height: 24px;
        margin: 0 1px 0 0;
        padding-left: 8px;
        display: flex;
        align-items: center;
        gap: 4px;
        border-radius: 3px;
        background: linear-gradient(#5c9cfc, #3c80f4 20%, #3878ec 80%, #2c64d8);
        white-space: nowrap;
      }
      :host([active]) button {
        background: #1c4ea8;
        box-shadow: inset 1px 1px 2px #103078;
      }
    `;
  }

  render() {
    return `<button>${svgIcon(this.getAttribute("icon"), 18)}<span>${halfWidth(this.getAttribute("label"))}</span></button>`;
  }
}

class NetMeter extends PeElement {
  styles() {
    return `
      :host {
        position: absolute;
        top: 1px;
        right: 327px;
        width: 92px;
        height: 38px;
        display: flex;
        align-items: center;
        gap: 4px;
        padding: 0 8px 0 1px;
        border: 1px solid #98a0a8;
        border-radius: 19px;
        background: linear-gradient(#f4f4f4, #d8dade);
        box-shadow: 0 1px 3px #8890a0;
        color: #101010;
        font-family: "Liberation Sans", sans-serif;
        font-size: 10px;
        line-height: 14px;
      }
      .load {
        width: 34px;
        height: 34px;
        border: 2px solid #2c7c28;
        border-radius: 17px;
        background: linear-gradient(#98cc90, #3c8c3c 48%, #2c9c20 50%, #60d048);
        color: #fff;
        line-height: 30px;
        text-align: center;
      }
      .rates { flex: 1; }
      .rates div { display: flex; align-items: center; justify-content: space-between; }
    `;
  }

  render() {
    return `
      <div class="load">54%</div>
      <div class="rates">
        <div><svg width="7" height="8"><path d="M2 7V4H0l3.500-4L7 4H5v3z" fill="#e02030"/></svg><span>0K/s</span></div>
        <div><svg width="7" height="8"><path d="M2 1v3H0l3.500 4L7 4H5V1z" fill="#589050"/></svg><span>0K/s</span></div>
      </div>
    `;
  }
}

class Watermark extends PeElement {
  styles() {
    return `
      :host {
        position: absolute;
        right: 5px;
        bottom: 5px;
        width: 206px;
        height: 62px;
        display: flex;
        gap: 4px;
        background: rgba(226, 234, 250, .25);
        pointer-events: none;
      }
      svg { margin-left: 1px; }
      .text { display: flex; flex-direction: column; }
      strong {
        padding-left: 5px;
        color: rgba(40, 150, 112, .75);
        font-size: 29px;
        line-height: 41px;
        font-weight: 700;
      }
      span {
        color: rgba(60, 110, 160, .35);
        font-family: "Liberation Sans", sans-serif;
        font-size: 11px;
        line-height: 20px;
      }
    `;
  }

  render() {
    return `
      <svg width="60" height="58" fill="none" stroke-width="3">
        <path d="M31 54C17 46 3 26 3 15C3 0 22 3 36 20C46 33 41 40 31 37C20 34 10 42 12 50" stroke="#2c5c90" opacity=".75"/>
        <path d="M42 22C54 20 60 28 54 38C50 46 40 56 30 54" stroke="#a83868" opacity=".75"/>
        <path d="M12 50C20 60 38 50 44 26" stroke="#4a5890" stroke-width="2" opacity=".4"/>
      </svg>
      <div class="text"><strong>野火论坛</strong><span>www.proewildfire.cn</span></div>
    `;
  }
}

customElements.define("pe-grip", Grip);
customElements.define("pe-tool", Tool);
customElements.define("pe-title-bar", TitleBar);
customElements.define("pe-menu-bar", MenuBar);
customElements.define("pe-toolbar", Toolbar);
customElements.define("pe-message-area", MessageArea);
customElements.define("pe-model-tree", ModelTree);
customElements.define("pe-viewport", Viewport);
customElements.define("pe-feature-bar", FeatureBar);
customElements.define("pe-task", Task);
customElements.define("pe-taskbar", Taskbar);
customElements.define("pe-net-meter", NetMeter);
customElements.define("pe-watermark", Watermark);
</script>
</body>
</html>
